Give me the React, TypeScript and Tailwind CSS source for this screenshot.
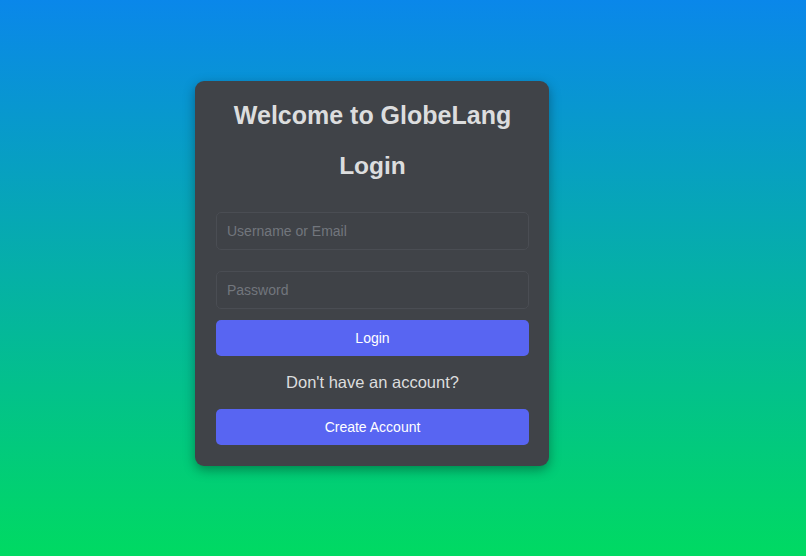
export default function App() {
  return (
    <div
      className="min-h-screen h-[556px] w-full bg-linear-to-b/srgb from-[#0a87ea] to-[#00da62] pt-[81px] pl-[195px]"
      style={{ fontFamily: '"Liberation Sans", Arial, sans-serif' }}
    >
      <div className="flex w-[354px] flex-col rounded-[9px] bg-[#404348] pl-[21px] pr-5 pt-5 pb-[21px] shadow-[0_4px_12px_rgba(0,0,0,0.35)]">
        <h2 className="text-center text-[25px] font-bold leading-[28px] text-[#dcddde]">
          Welcome to GlobeLang
        </h2>
        <h3 className="mt-[23px] text-center text-[24.5px] font-bold leading-[28px] text-[#dcddde]">
          Login
        </h3>
        <input
          type="text"
          placeholder="Username or Email"
          className="mt-8 h-[38px] w-full rounded-[5px] border border-[#4a4d53] bg-[#3f4247] px-[10px] text-[14px] text-[#dcddde] placeholder:text-[#72767d] outline-none"
        />
        <input
          type="password"
          placeholder="Password"
          className="mt-[21px] h-[38px] w-full rounded-[5px] border border-[#4a4d53] bg-[#3f4247] px-[10px] text-[14px] text-[#dcddde] placeholder:text-[#72767d] outline-none"
        />
        <button className="mt-[11px] h-9 w-full rounded-[5px] bg-[#5865f2] text-[14px] text-white">
          Login
        </button>
        <p className="mt-[17px] text-center text-[16.5px] leading-[19px] text-[#dcddde]">
          Don't have an account?
        </p>
        <button className="mt-[17px] h-9 w-full rounded-[5px] bg-[#5865f2] text-[14px] text-white">
          Create Account
        </button>
      </div>
    </div>
  );
}
